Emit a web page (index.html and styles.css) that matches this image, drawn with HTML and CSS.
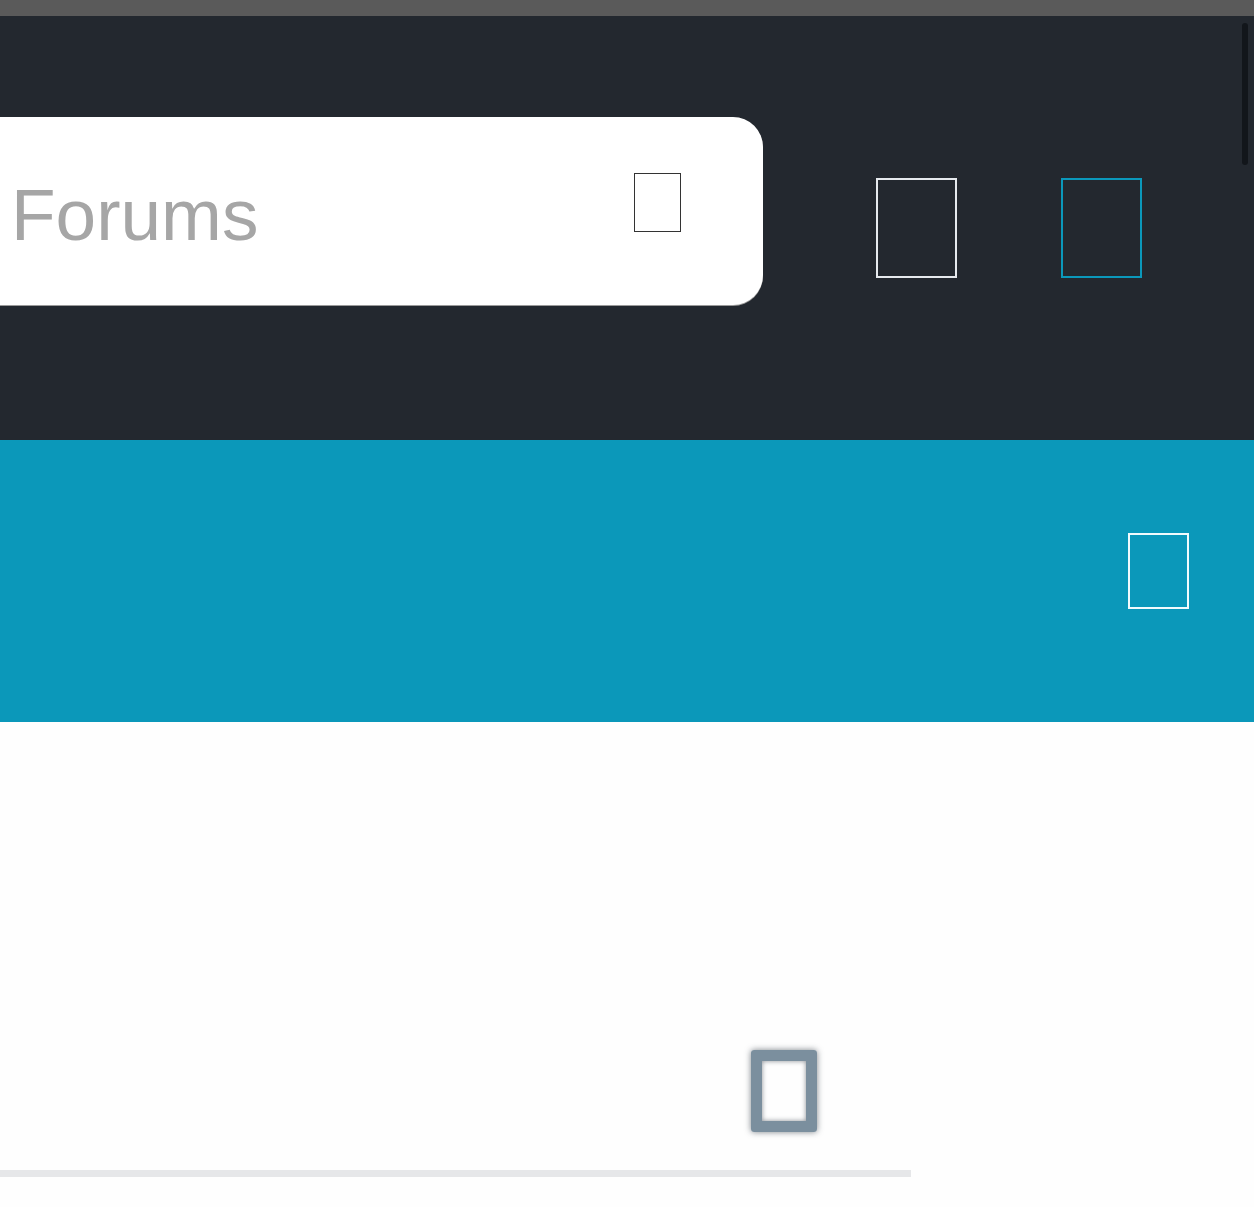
FILE: index.html
```html
<!DOCTYPE html>
<html>
<head>
<meta charset="utf-8">
<link rel="stylesheet" href="styles.css">
</head>
<body>
<div class="topbar"></div>
<header class="header">
  <div class="search">
    <span class="search-text">Forums</span>
    <span class="tofu tofu-search"></span>
  </div>
  <span class="tofu tofu-light"></span>
  <span class="tofu tofu-teal"></span>
</header>
<section class="band">
  <span class="tofu tofu-band"></span>
</section>
<main class="content">
  <div class="float-row"><span class="tofu tofu-shadow"></span></div>
  <div class="rule"></div>
</main>
<div class="scroll-thumb"></div>
</body>
</html>
```
FILE: styles.css
```css
html, body {
  margin: 0;
  padding: 0;
  background: #fefefe;
  font-family: "Liberation Sans", Arial, sans-serif;
  overflow: hidden;
}
.topbar {
  height: 16px;
  background: #5a5a5a;
}
.header {
  height: 424px;
  background: #23282f;
  box-sizing: border-box;
  padding-top: 101px;
  display: flex;
  align-items: flex-start;
}
.search {
  width: 763px;
  height: 188px;
  background: #fff;
  border-radius: 0 30px 30px 0;
  box-shadow: 0 1px 0 #9a9a9a;
  display: flex;
  align-items: flex-start;
  box-sizing: border-box;
  padding-left: 11px;
  flex-shrink: 0;
}
.search-text {
  font-size: 73px;
  color: #a6a6a6;
  line-height: 1;
  margin-top: 61px;
}
.tofu {
  display: block;
  box-sizing: border-box;
  flex-shrink: 0;
}
.tofu-search {
  width: 47px;
  height: 59px;
  border: 1.5px solid #333;
  margin-left: auto;
  margin-right: 82px;
  margin-top: 56px;
}
.tofu-light {
  width: 81px;
  height: 100px;
  border: 2.5px solid #e6eaee;
  margin-left: 113px;
  margin-top: 61px;
}
.tofu-teal {
  width: 81px;
  height: 100px;
  border: 2.5px solid #0b98bb;
  margin-left: 104px;
  margin-top: 61px;
}
.band {
  height: 282px;
  background: #0b98ba;
  display: flex;
  justify-content: flex-end;
  align-items: flex-start;
  padding-top: 93px;
  padding-right: 65px;
  box-sizing: border-box;
}
.tofu-band {
  width: 61px;
  height: 76px;
  border: 2px solid #f2fbfd;
}
.content {
  height: 485px;
  box-sizing: border-box;
  padding-top: 328px;
}
.float-row {
  display: flex;
  padding-left: 751px;
  height: 120px;
}
.tofu-shadow {
  width: 66px;
  height: 82px;
  border: 11px solid #7b8f9e;
  border-radius: 3px;
  box-shadow: 0 0 6px rgba(40, 50, 60, 0.6), inset 0 0 5px rgba(40, 50, 60, 0.55);
}
.rule {
  width: 911px;
  height: 7px;
  background: #e6e7e9;
}
.scroll-thumb {
  position: absolute;
  top: 23px;
  left: 1242px;
  width: 6px;
  height: 142px;
  border-radius: 3px;
  background: #12161b;
}
```
